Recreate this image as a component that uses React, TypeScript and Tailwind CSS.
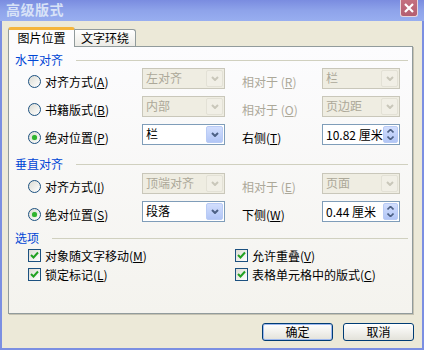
import React from 'react';

type ComboProps = { text: string; disabled?: boolean; w: string };

function Chevron({ color }: { color: string }) {
  return (
    <svg width="8" height="5" viewBox="0 0 8 5">
      <path d="M1 1 L4 4 L7 1" fill="none" stroke={color} strokeWidth="2" />
    </svg>
  );
}

function Combo({ text, disabled, w }: ComboProps) {
  return (
    <div
      className={`${w} flex items-stretch h-[21px] border ${
        disabled ? 'border-[#c9c7ba] bg-[#efede2] text-[#aca899]' : 'border-[#7f9db9] bg-white text-black'
      }`}
    >
      <span className="flex-1 pl-[3px] pt-[2px] leading-[14px] overflow-hidden whitespace-nowrap">{text}</span>
      <div
        className={`w-[17px] m-px flex items-center justify-center rounded-[2px] border ${
          disabled
            ? 'border-[#e3e1d6] bg-[#f1efe6]'
            : 'border-[#b9cbf5] bg-gradient-to-b from-[#d2defd] to-[#b2c6f6]'
        }`}
      >
        <Chevron color={disabled ? '#c9c7ba' : '#4d6185'} />
      </div>
    </div>
  );
}

function Spin({ text }: { text: string }) {
  return (
    <div className="w-[78px] flex items-stretch h-[21px] border border-[#7f9db9] bg-white">
      <span className="flex-1 min-w-0 pl-[3px] pt-[3px] leading-[14px] whitespace-nowrap">{text}</span>
      <div className="w-[15px] shrink-0 m-px flex flex-col items-center justify-center gap-[3px] rounded-[2px] border border-[#b9cbf5] bg-gradient-to-b from-[#d2defd] to-[#b2c6f6]">
        <svg width="7" height="4" viewBox="0 0 7 4">
          <path d="M0.5 3.5 L3.5 0.5 L6.5 3.5" fill="none" stroke="#4d6185" strokeWidth="1.6" />
        </svg>
        <svg width="7" height="4" viewBox="0 0 7 4">
          <path d="M0.5 0.5 L3.5 3.5 L6.5 0.5" fill="none" stroke="#4d6185" strokeWidth="1.6" />
        </svg>
      </div>
    </div>
  );
}

function Radio({ checked }: { checked?: boolean }) {
  return (
    <div className="w-[13px] h-[13px] rounded-full border border-[#1c5180] bg-gradient-to-br from-[#dcdcd4] to-white flex items-center justify-center shrink-0">
      {checked && <div className="w-[5px] h-[5px] rounded-full bg-[#2fb32f] shadow-[0_0_1px_#63d063]" />}
    </div>
  );
}

function Check() {
  return (
    <div className="w-[13px] h-[13px] border border-[#1c5180] bg-gradient-to-br from-[#dcdcd4] to-white flex items-center justify-center shrink-0">
      <svg width="9" height="9" viewBox="0 0 9 9">
        <path d="M1 4 L3.5 6.5 L8 1.5" fill="none" stroke="#21a121" strokeWidth="2" />
      </svg>
    </div>
  );
}

function Key({ label, k }: { label: string; k: string }) {
  return (
    <span className="whitespace-nowrap">
      {label}(<span className="underline underline-offset-1">{k}</span>)
    </span>
  );
}

function Heading({ text, mt }: { text: string; mt: string }) {
  return (
    <div className={`${mt} h-[16px] flex items-center pl-[6px] pr-[4px]`}>
      <span className="text-[#0046d5]">{text}</span>
      <div className="flex-1 ml-[13px] h-px bg-[#d0d0bf]" />
    </div>
  );
}

type RowProps = {
  mt: string;
  checked?: boolean;
  label: string;
  k: string;
  combo: string;
  comboDisabled?: boolean;
  rightLabel: string;
  rk: string;
  rightDisabled?: boolean;
  right: React.ReactNode;
};

function Row({ mt, checked, label, k, combo, comboDisabled, rightLabel, rk, rightDisabled, right }: RowProps) {
  return (
    <div className={`${mt} flex items-start pl-[19px]`}>
      <div className="w-[114px] h-[21px] pt-[6px] flex items-center gap-[4px]">
        <Radio checked={checked} />
        <Key label={label} k={k} />
      </div>
      <Combo text={combo} disabled={comboDisabled} w="w-[83px]" />
      <div className={`ml-[17px] w-[80px] h-[21px] pt-[6px] flex items-center ${rightDisabled ? 'text-[#aca899]' : ''}`}>
        <Key label={rightLabel} k={rk} />
      </div>
      {right}
    </div>
  );
}

export default function App() {
  return (
    <div className="w-[424px] h-[350px] flex flex-col bg-[#ece9d8] text-[12px] leading-[14px] text-black font-['Noto_Sans_CJK_SC','Liberation_Sans',sans-serif] overflow-hidden">
      {/* title bar */}
      <div className="h-[21px] flex items-start bg-gradient-to-b from-[#7a8ce0] via-[#8ea3ea] to-[#98aef0]">
        <span className="pl-[6px] pt-[1px] text-[14px] leading-[17px] font-bold tracking-[0.5px] text-[#d8e2f7]">高级版式</span>
        <div className="ml-auto mr-[6px] w-[18px] h-[17px] rounded-b-[3px] border border-t-0 border-[#e8d6dc] bg-gradient-to-b from-[#c4707f] to-[#b45e70] flex items-center justify-center">
          <svg width="10" height="10" viewBox="0 0 10 10">
            <path d="M1 1 L9 9 M9 1 L1 9" stroke="white" strokeWidth="2.2" />
          </svg>
        </div>
      </div>

      <div className="flex-1 flex flex-col border-x-2 border-b-2 border-[#7b8fe2]">
        {/* tabs */}
        <div className="mt-[6px] ml-[6px] h-[19px] flex items-end">
          <div className="relative z-10 -mb-px w-[67px] h-[20px] border-x border-[#919b9c] border-t-[3px] border-t-[#f5b53b] rounded-t-[3px] bg-[#fcfcfe] flex items-center justify-center pb-px">
            图片位置
          </div>
          <div className="w-[61px] h-[17px] border-r border-t border-[#919b9c] rounded-tr-[3px] bg-gradient-to-b from-white to-[#ecebe6] flex items-center justify-center">
            文字环绕
          </div>
        </div>

        {/* panel */}
        <div className="ml-[6px] mr-[9px] h-[268px] flex flex-col border border-[#919b9c] shadow-[1px_1px_0_#c5c2b2] bg-gradient-to-b from-[#fcfcfe] to-[#f4f3ee]">
          <Heading text="水平对齐" mt="mt-[5px]" />
          <Row
            mt="mt-0"
            label="对齐方式"
            k="A"
            combo="左对齐"
            comboDisabled
            rightLabel="相对于 "
            rk="R"
            rightDisabled
            right={<Combo text="栏" disabled w="w-[78px]" />}
          />
          <Row
            mt="mt-[7px]"
            label="书籍版式"
            k="B"
            combo="内部"
            comboDisabled
            rightLabel="相对于 "
            rk="O"
            rightDisabled
            right={<Combo text="页边距" disabled w="w-[78px]" />}
          />
          <Row
            mt="mt-[7px]"
            checked
            label="绝对位置"
            k="P"
            combo="栏"
            rightLabel="右侧"
            rk="T"
            right={<Spin text="10.82 厘米" />}
          />

          <Heading text="垂直对齐" mt="mt-[11px]" />
          <Row
            mt="mt-px"
            label="对齐方式"
            k="I"
            combo="顶端对齐"
            comboDisabled
            rightLabel="相对于 "
            rk="E"
            rightDisabled
            right={<Combo text="页面" disabled w="w-[78px]" />}
          />
          <Row
            mt="mt-[7px]"
            checked
            label="绝对位置"
            k="S"
            combo="段落"
            rightLabel="下侧"
            rk="W"
            right={<Spin text="0.44 厘米" />}
          />

          <Heading text="选项" mt="mt-[8px]" />
          <div className="grid grid-cols-[207px_1fr] pl-[19px]">
            <div className="h-[19px] flex items-center gap-[4px]">
              <Check />
              <Key label="对象随文字移动" k="M" />
            </div>
            <div className="h-[19px] flex items-center gap-[4px]">
              <Check />
              <Key label="允许重叠" k="V" />
            </div>
            <div className="h-[19px] flex items-center gap-[4px]">
              <Check />
              <Key label="锁定标记" k="L" />
            </div>
            <div className="h-[19px] flex items-center gap-[4px]">
              <Check />
              <Key label="表格单元格中的版式" k="C" />
            </div>
          </div>
        </div>

        {/* buttons */}
        <div className="mt-[9px] mr-[8px] flex justify-end gap-[10px]">
          <button className="w-[71px] h-[18px] rounded-[3px] border border-[#003c74] bg-gradient-to-b from-white to-[#e3e2da] shadow-[inset_0_0_0_1px_#9db8ee] flex items-center justify-center leading-[14px]">
            确定
          </button>
          <button className="w-[71px] h-[18px] rounded-[3px] border border-[#003c74] bg-gradient-to-b from-white to-[#e3e2da] flex items-center justify-center leading-[14px]">
            取消
          </button>
        </div>
      </div>
    </div>
  );
}
